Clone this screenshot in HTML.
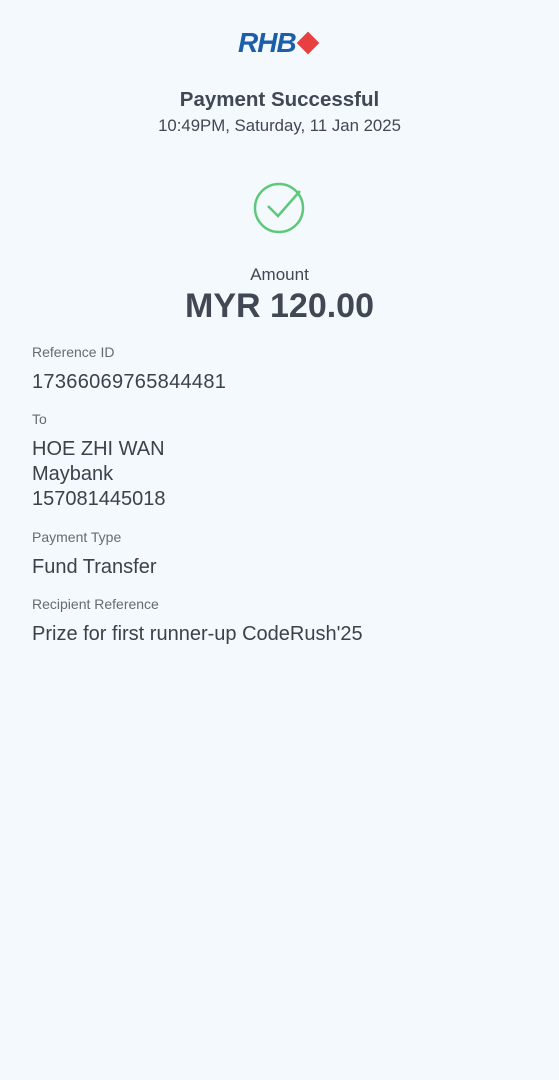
<!DOCTYPE html>
<html><head><meta charset="utf-8"><style>
body{margin:0;width:559px;height:1080px;background:#f3f9fc;font-family:"Liberation Sans",sans-serif;color:#414753;position:relative;overflow:hidden}
.a{position:absolute;white-space:nowrap}
.c{left:0;width:559px;text-align:center}
.l{left:32px;font-size:14px;color:#666b73}
.v{left:32px;font-size:20px;color:#3c414b;line-height:25px}
</style></head><body>
<div class="a" style="left:238px;top:27px;font-size:28px;font-weight:bold;font-style:italic;color:#1b5ea9;letter-spacing:-1px">RHB</div>
<div class="a" style="left:300px;top:35px;width:16px;height:16px;background:#e84040;transform:rotate(45deg)"></div>
<div class="a c" style="top:88px;font-size:20.5px;font-weight:bold">Payment Successful</div>
<div class="a c" style="top:116px;font-size:16.8px">10:49PM, Saturday, 11 Jan 2025</div>
<svg class="a" style="left:240px;top:170px" width="80" height="80"><circle cx="39" cy="38" r="24" fill="none" stroke="#5ec87a" stroke-width="2.5"/><path d="M28 36 L38 46 L60 21" fill="none" stroke="#5ec87a" stroke-width="2.5"/></svg>
<div class="a c" style="top:265px;font-size:17px">Amount</div>
<div class="a c" style="top:287px;font-size:34px;font-weight:bold">MYR 120.00</div>
<div class="a l" style="top:344px">Reference ID</div>
<div class="a v" style="top:370px;letter-spacing:0.3px">17366069765844481</div>
<div class="a l" style="top:411px">To</div>
<div class="a v" style="top:437px">HOE ZHI WAN<br>Maybank<br>157081445018</div>
<div class="a l" style="top:529px">Payment Type</div>
<div class="a v" style="top:555px">Fund Transfer</div>
<div class="a l" style="top:596px">Recipient Reference</div>
<div class="a v" style="top:622px">Prize for first runner-up CodeRush'25</div>
</body></html>
